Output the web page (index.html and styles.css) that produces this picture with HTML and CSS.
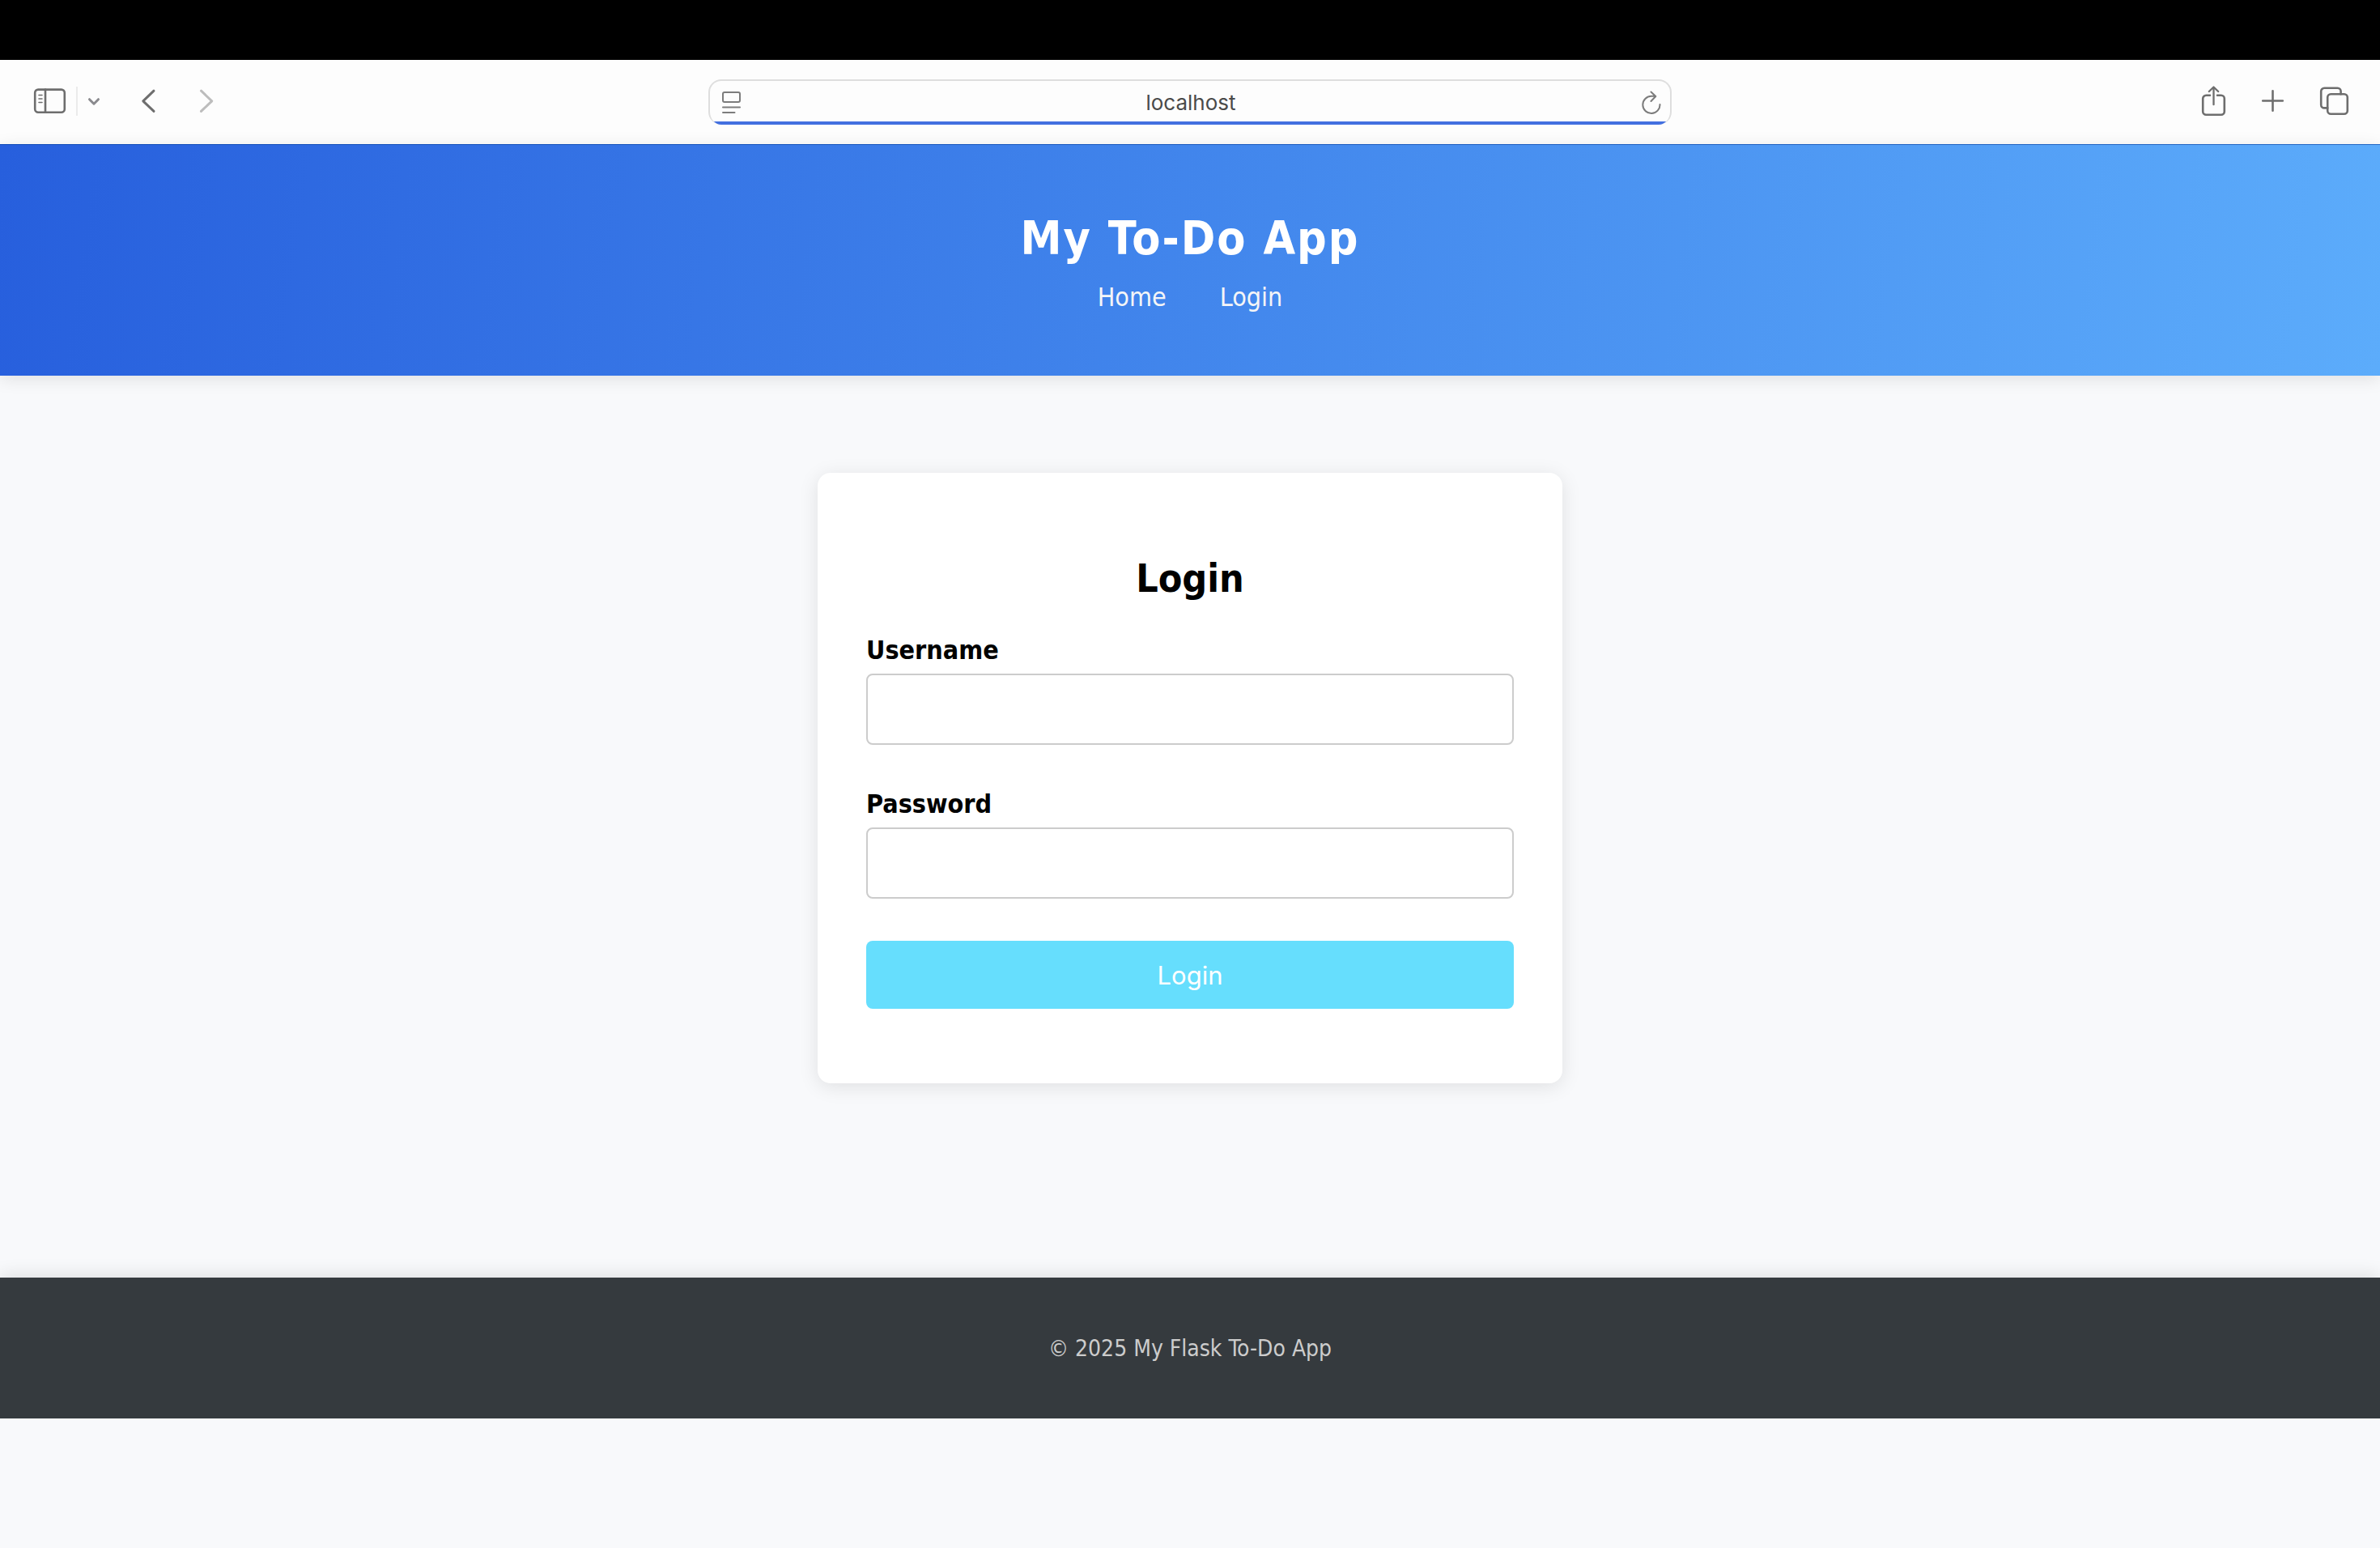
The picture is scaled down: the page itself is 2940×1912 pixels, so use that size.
FILE: index.html
```html
<!DOCTYPE html>
<html lang="en">
<head>
  <meta charset="utf-8">
  <meta name="viewport" content="width=device-width, initial-scale=1">
  <title>My To-Do App</title>
  <link rel="stylesheet" href="styles.css">
</head>
<body>
  <div class="menubar"></div>
  <div class="toolbar">
    <div class="tools">
      <button class="tool" type="button" aria-label="Show sidebar">
        <svg width="48" height="40" viewBox="0 0 48 40">
          <rect x="7.2" y="5.6" width="36.6" height="28.2" rx="4"/>
          <path d="M20 5.6V33.8"/>
          <path class="thin" d="M12 12.5h4M12 17h4M12 21.5h4"/>
        </svg>
      </button>
      <span class="divider"></span>
      <button class="tool tool-small" type="button" aria-label="Tab groups">
        <svg width="20" height="40" viewBox="0 0 20 40"><path d="M4.5 17.7L10 23.2L15.5 17.7"/></svg>
      </button>
      <button class="tool tool-nav" type="button" aria-label="Back">
        <svg width="24" height="40" viewBox="0 0 24 40"><path d="M18 7.2L4.8 19.8L18 32.4"/></svg>
      </button>
      <button class="tool tool-nav tool-off" type="button" aria-label="Forward">
        <svg width="24" height="40" viewBox="0 0 24 40"><path d="M6.5 7.2L19.7 19.8L6.5 32.4"/></svg>
      </button>
    </div>
    <div class="address">
      <button class="tool tool-field" type="button" aria-label="Page menu">
        <svg width="28" height="32" viewBox="0 0 28 32">
          <rect x="4" y="3" width="21" height="12" rx="2"/>
          <path d="M4 21.5h21M4 28h14.5"/>
        </svg>
      </button>
      <input class="url" type="text" value="localhost" aria-label="Address">
      <button class="tool tool-field" type="button" aria-label="Reload">
        <svg width="28" height="32" viewBox="0 0 28 32">
          <path d="M25.5 18A10.6 10.6 0 1 1 14.9 7.8H20M14.5 2.5L20.3 8L14.5 14"/>
        </svg>
      </button>
    </div>
    <div class="tools tools-end">
      <button class="tool" type="button" aria-label="Share">
        <svg width="40" height="40" viewBox="0 0 40 40">
          <path d="M18 12.8H13.2a4 4 0 0 0-4 4V32.8a4 4 0 0 0 4 4H31.8a4 4 0 0 0 4-4V16.8a4 4 0 0 0-4-4H27"/>
          <path class="fine" d="M22.5 24.2V2.8M16.8 8L22.5 2.5L28.2 8"/>
        </svg>
      </button>
      <button class="tool" type="button" aria-label="New tab">
        <svg width="40" height="40" viewBox="0 0 40 40"><path d="M19.5 7.2V31.8M7.2 19.5H31.8"/></svg>
      </button>
      <button class="tool" type="button" aria-label="Tab overview">
        <svg width="40" height="40" viewBox="0 0 40 40">
          <rect x="11.2" y="11.2" width="24.6" height="24.6" rx="4"/>
          <path d="M11.2 28.4H7.2a4 4 0 0 1-4-4V7.8a4 4 0 0 1 4-4H23.6a4 4 0 0 1 4 4V11.2"/>
        </svg>
      </button>
    </div>
  </div>

  <header class="banner">
    <h1 class="brand">My To-Do App</h1>
    <nav class="menu">
      <a class="menu-link" href="#home">Home</a>
      <a class="menu-link" href="#login">Login</a>
    </nav>
  </header>

  <main class="content">
    <form class="card" id="login">
      <h2 class="card-title">Login</h2>
      <label class="label" for="username">Username</label>
      <input class="input" id="username" name="username" type="text">
      <label class="label" for="password">Password</label>
      <input class="input" id="password" name="password" type="password">
      <button class="submit" type="submit">Login</button>
    </form>
  </main>

  <footer class="footer">© 2025 My Flask To-Do App</footer>
</body>
</html>
```

FILE: styles.css
```css
*,
*::before,
*::after {
  box-sizing: border-box;
}

body {
  margin: 0;
  background: #f8f9fb;
  color: #000;
  font-family: Tahoma, "DejaVu Sans Condensed", "DejaVu Sans", sans-serif;
  font-size: 32px;
}

/* Browser window */
.menubar {
  height: 74px;
  background: #000;
}

.toolbar {
  display: grid;
  grid-template-columns: 1fr minmax(0, 1190px) 1fr;
  align-items: center;
  padding: 24px 36px;
  background: #fdfdfd;
}

.tools {
  display: flex;
  align-items: center;
  padding-bottom: 2px;
}

.tools-end {
  justify-content: flex-end;
  gap: 36px;
}

.tool {
  display: flex;
  padding: 0;
  border: 0;
  background: none;
  color: #6e6e6e;
}

.tool svg {
  fill: none;
  stroke: currentColor;
  stroke-width: 2.6px;
  stroke-linecap: round;
  stroke-linejoin: round;
}

.tool .thin {
  stroke-width: 1.6px;
}

.tool .fine {
  stroke-width: 2.3px;
}

.tool-small {
  color: #8a8a8e;
}

.tool-small svg,
.tool-nav svg {
  stroke-width: 3px;
}

.tool-nav {
  margin-left: 46px;
}

.tool-off {
  color: #bdbdbd;
}

.tool-field {
  color: #7c7c7c;
}

.tool-field svg {
  stroke-width: 2px;
}

.divider {
  width: 2px;
  height: 36px;
  margin: 0 10px;
  background: #ebebeb;
}

.address {
  position: relative;
  display: flex;
  align-items: center;
  height: 56px;
  padding: 0 10px 0 12px;
  overflow: hidden;
  border: 2px solid #dedede;
  border-bottom: 0;
  border-radius: 16px;
}

/* Page load progress along the bottom of the field */
.address::after {
  content: "";
  position: absolute;
  right: 0;
  bottom: 0;
  left: 0;
  height: 4px;
  background: #4370e0;
}

.url {
  flex: 1;
  min-width: 0;
  padding: 0;
  border: 0;
  outline: 0;
  background: none;
  color: #4a4a4a;
  font: 26px/32px Inter, sans-serif;
  text-align: center;
}

/* Page */
.banner {
  position: relative;
  padding: 82px 40px 78px;
  background: linear-gradient(98deg, #275fdd, #5cacfb);
  box-shadow: inset 0 1px 0 rgba(0, 60, 160, 0.6), 0 4px 20px rgba(0, 0, 0, 0.1);
  color: #fff;
  text-align: center;
}

.brand {
  margin: 0 0 20px;
  font-size: 57px;
  line-height: 68px;
  letter-spacing: 2px;
}

.menu {
  display: flex;
  justify-content: center;
  gap: 66px;
}

.menu-link {
  color: #f4f5f7;
  line-height: 38px;
  text-decoration: none;
}

.content {
  padding: 120px 40px 240px;
}

.card {
  display: flex;
  flex-direction: column;
  max-width: 920px;
  margin: 0 auto;
  padding: 100px 60px 92px;
  border-radius: 16px;
  background: #fff;
  box-shadow: 0 4px 24px rgba(0, 0, 0, 0.1);
}

.card-title {
  margin: 0 0 38px;
  font-size: 48px;
  line-height: 60px;
  text-align: center;
}

.label {
  margin-bottom: 8px;
  font-weight: 700;
  line-height: 42px;
}

.input {
  height: 88px;
  margin-bottom: 52px;
  padding: 0 20px;
  border: 2px solid #ccc;
  border-radius: 8px;
  background: #fff;
  font: inherit;
}

.submit {
  height: 84px;
  padding: 2px 0 0;
  border: 0;
  border-radius: 8px;
  background: #66defd;
  color: #fff;
  font: 31px/40px Inter, sans-serif;
}

.footer {
  padding: 69px 40px 67px;
  background: #353a3e;
  box-shadow: 0 -4px 20px rgba(0, 0, 0, 0.1);
  color: #ccc;
  font-size: 28px;
  line-height: 38px;
  text-align: center;
}
```
